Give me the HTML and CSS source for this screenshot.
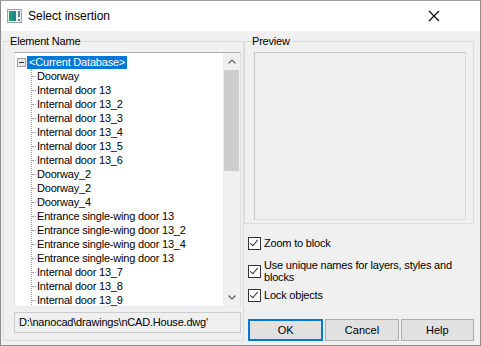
FILE: index.html
```html
<!DOCTYPE html>
<html lang="en">
<head>
    <meta charset="UTF-8">
    <title>Select insertion</title>
    <link rel="stylesheet" href="styles.css">
</head>
<body>
    <div class="window">
        <div class="titlebar">
            <svg class="app-icon" width="16" height="16" viewBox="0 0 16 16">
                <rect x="0.5" y="1.5" width="14" height="13" fill="#e8f0f0" stroke="#9aa"/>
                <rect x="2" y="3" width="7" height="10" fill="#1f8a8a"/>
                <rect x="2" y="3" width="3" height="10" fill="#2a9a6a"/>
                <rect x="11" y="3" width="2" height="6" fill="#6b7d8c"/>
                <rect x="11" y="11" width="2" height="2" fill="#6b7d8c"/>
            </svg>
            <span class="title">Select insertion</span>
            <svg class="close" width="12" height="12" viewBox="0 0 12 12">
                <path d="M1 1 L11 11 M11 1 L1 11" stroke="#000" stroke-width="1.1"/>
            </svg>
        </div>

        <div class="content">
            <fieldset class="group left-group">
                <legend>Element Name</legend>
                <div class="tree">
                    <div class="tree-items">
                        <div class="root">
                            <span class="toggle"></span>
                            <span class="selected">&lt;Current Database&gt;</span>
                        </div>
                        <ul class="children">
                            <li>Doorway</li>
                            <li>Internal door 13</li>
                            <li>Internal door 13_2</li>
                            <li>Internal door 13_3</li>
                            <li>Internal door 13_4</li>
                            <li>Internal door 13_5</li>
                            <li>Internal door 13_6</li>
                            <li>Doorway_2</li>
                            <li>Doorway_2</li>
                            <li>Doorway_4</li>
                            <li>Entrance single-wing door 13</li>
                            <li>Entrance single-wing door 13_2</li>
                            <li>Entrance single-wing door 13_4</li>
                            <li>Entrance single-wing door 13</li>
                            <li>Internal door 13_7</li>
                            <li>Internal door 13_8</li>
                            <li>Internal door 13_9</li>
                            <li class="partial">Internal door 13_10</li>
                        </ul>
                    </div>
                    <div class="scrollbar">
                        <div class="arrow">
                            <svg width="8" height="5" viewBox="0 0 8 5"><path d="M0.5 4.5 L4 1 L7.5 4.5" fill="none" stroke="#606060" stroke-width="1.2"/></svg>
                        </div>
                        <div class="track"><div class="thumb"></div></div>
                        <div class="arrow">
                            <svg width="8" height="5" viewBox="0 0 8 5"><path d="M0.5 0.5 L4 4 L7.5 0.5" fill="none" stroke="#606060" stroke-width="1.2"/></svg>
                        </div>
                    </div>
                </div>
                <div class="path-field">D:\nanocad\drawings\nCAD.House.dwg'</div>
            </fieldset>

            <div class="right-col">
                <fieldset class="group preview-group">
                    <legend>Preview</legend>
                    <div class="preview"></div>
                </fieldset>

                <div class="options">
                    <label class="check"><span class="box"></span><span>Zoom to block</span></label>
                    <label class="check two-line"><span class="box"></span><span>Use unique names for layers, styles and blocks</span></label>
                    <label class="check last"><span class="box"></span><span>Lock objects</span></label>
                </div>

                <div class="buttons">
                    <button class="default">OK</button>
                    <button>Cancel</button>
                    <button>Help</button>
                </div>
            </div>
        </div>
    </div>
</body>
</html>
```

FILE: styles.css
```css
html, body {
    margin: 0;
    padding: 0;
    background-color: #ffffff;
}
body {
    font-family: "Liberation Sans", Arial, sans-serif;
    font-size: 11px;
    letter-spacing: -0.2px;
    color: #000;
}
.window {
    width: 481px;
    height: 346px;
    box-sizing: border-box;
    border: 1px solid #8c8c8c;
    border-top-color: #a0a0a0;
    background-color: #f0f0f0;
    display: flex;
    flex-direction: column;
    overflow: hidden;
}
.titlebar {
    height: 30px;
    background-color: #fff;
    display: flex;
    align-items: center;
    padding: 0 0 0 6px;
    flex-shrink: 0;
}
.app-icon {
    margin-right: 5px;
}
.title {
    font-size: 12px;
    letter-spacing: 0;
    flex: 1;
}
.close {
    margin-right: 40px;
}
.content {
    flex: 1;
    display: flex;
    padding: 3px 5px 4px 2px;
}
.group {
    margin: 0;
    min-width: 0;
    border: 1px solid #dcdcdc;
    border-radius: 0;
    padding: 0;
}
.group legend {
    padding: 0;
    margin-left: -4px;
    line-height: 14px;
}
.left-group {
    width: 241px;
    box-sizing: border-box;
    padding: 4px 2px 4px 10px;
    display: flex;
    flex-direction: column;
}
.tree {
    height: 253px;
    background-color: #fff;
    border: 1px solid #828790;
    border-color: #abadb3 #dbdfe6 #e3e9ef #e2e3ea;
    display: flex;
    overflow: hidden;
}
.tree-items {
    flex: 1;
    padding-top: 2px;
    overflow: hidden;
}
.root {
    height: 14px;
    display: flex;
    align-items: center;
    padding-left: 2px;
}
.toggle {
    width: 7px;
    height: 7px;
    border: 1px solid #a0a0a0;
    background-color: #e8e8e8;
    position: relative;
    margin-right: 1px;
}
.toggle::after {
    content: "";
    position: absolute;
    left: 1px;
    right: 1px;
    top: 3px;
    height: 1px;
    background-color: #333;
}
.selected {
    background-color: #0078d7;
    color: #fff;
    padding: 0 2px;
    line-height: 13px;
}
.children {
    list-style: none;
    margin: 0 0 0 16px;
    padding: 0;
    border-left: 1px dotted #a0a0a0;
}
.children li {
    height: 14px;
    line-height: 14px;
    padding-left: 5px;
    position: relative;
    white-space: nowrap;
}
.children li.partial {
    height: 2px;
    overflow: hidden;
}
.children li::before {
    content: "";
    position: absolute;
    left: 0;
    top: 7px;
    width: 4px;
    border-top: 1px dotted #a0a0a0;
}
.scrollbar {
    width: 17px;
    background-color: #f0f0f0;
    display: flex;
    flex-direction: column;
}
.arrow {
    height: 17px;
    display: flex;
    align-items: center;
    justify-content: center;
}
.track {
    flex: 1;
}
.thumb {
    margin: 0 1px;
    height: 101px;
    background-color: #cdcdcd;
}
.path-field {
    margin-top: 5px;
    height: 21px;
    box-sizing: border-box;
    border: 1px solid #cccccc;
    background-color: #f0f0f0;
    padding: 3px 4px;
    white-space: nowrap;
}
.right-col {
    flex: 1;
    min-width: 0;
    display: flex;
    flex-direction: column;
    padding-right: 1px;
}
.preview-group {
    height: 190px;
    box-sizing: border-box;
    padding: 4px 7px 4px 9px;
}
.preview-group legend {
    margin-left: -2px;
}
.preview {
    height: 168px;
    box-sizing: border-box;
    border: 1px solid #dadada;
    border-top-color: #c8c8c8;
    border-left-color: #c8c8c8;
}
.options {
    padding: 12px 0 0 4px;
    display: flex;
    flex-direction: column;
}
.check {
    display: flex;
    align-items: center;
    gap: 3px;
    line-height: 14px;
}
.check.two-line {
    margin-top: 9px;
    line-height: 12px;
}
.check.last {
    margin-top: 5px;
}
.box {
    width: 11px;
    height: 11px;
    border: 1px solid #333;
    background-color: #fff;
    flex-shrink: 0;
    position: relative;
}
.box::after {
    content: "";
    position: absolute;
    left: 3px;
    top: 0px;
    width: 3px;
    height: 7px;
    border: solid #333;
    border-width: 0 1px 1px 0;
    transform: rotate(40deg);
}
.buttons {
    margin-top: auto;
    display: flex;
    gap: 2px;
    padding-left: 4px;
}
.buttons button {
    flex: 1;
    height: 22px;
    font-family: inherit;
    font-size: 11px;
    color: #000;
    background-color: #e1e1e1;
    border: 1px solid #adadad;
    padding: 0;
}
.buttons button.default {
    border: 2px solid #0078d7;
}
```
